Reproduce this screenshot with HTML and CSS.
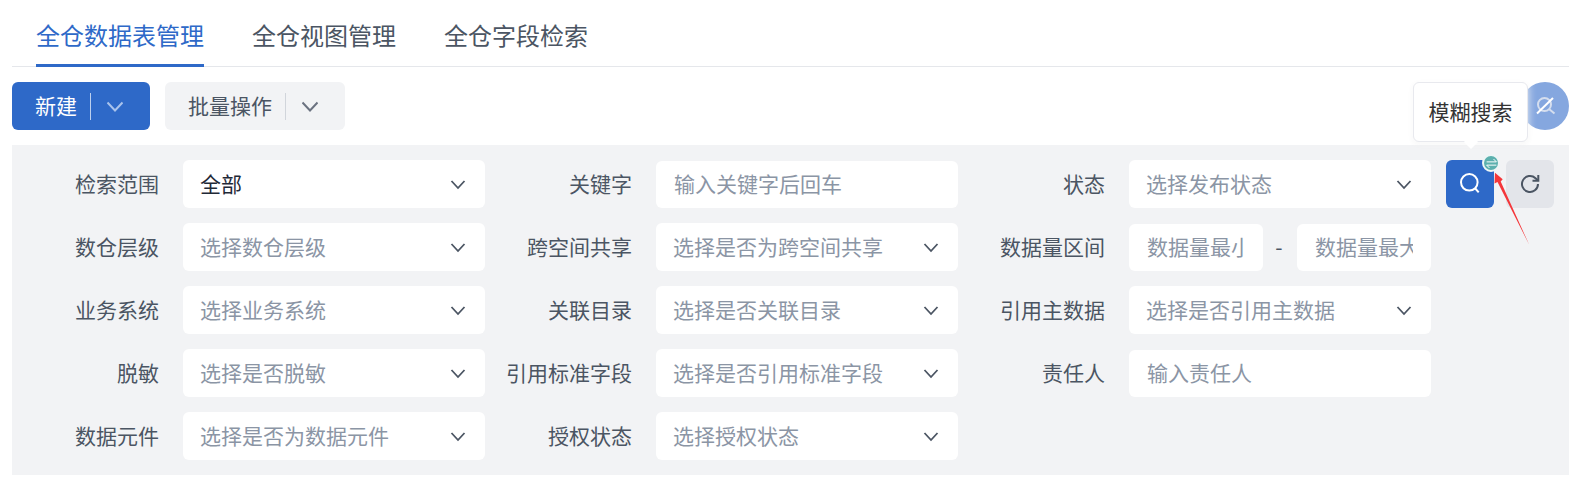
FILE: index.html
```html
<!DOCTYPE html>
<html lang="zh-CN">
<head>
  <meta charset="UTF-8">
  <title>全仓数据表管理</title>
  <link rel="stylesheet" href="styles.css">
</head>
<body>
  <div class="page">
    <nav class="tabs">
      <a class="tab active">全仓数据表管理</a>
      <a class="tab">全仓视图管理</a>
      <a class="tab">全仓字段检索</a>
    </nav>

    <div class="toolbar">
      <div class="btn btn-primary">
        <span>新建</span><i class="divider"></i>
        <svg class="chevron" viewBox="0 0 16 16"><path d="M.5 4.500 8 12.500l7.500-8"/></svg>
      </div>
      <div class="btn btn-plain">
        <span>批量操作</span><i class="divider"></i>
        <svg class="chevron" viewBox="0 0 16 16"><path d="M.5 4.500 8 12.500l7.500-8"/></svg>
      </div>
      <div class="toggle">
        <svg viewBox="0 0 24 24">
          <circle class="faded" cx="11.500" cy="10.500" r="6.500"/>
          <path class="faded" d="m16 15 5.500 4.500"/>
          <path d="M4 19.500 20 4"/>
        </svg>
      </div>
    </div>

    <div class="filters">
      <div class="grid">
        <div class="item">
          <label>检索范围</label>
          <div class="select value"><span>全部</span><svg viewBox="0 0 16 16"><path d="M1.500 5 8 12l6.500-7"/></svg></div>
        </div>
        <div class="item">
          <label>关键字</label>
          <input class="input" placeholder="输入关键字后回车">
        </div>
        <div class="item">
          <label>状态</label>
          <div class="select"><span>选择发布状态</span><svg viewBox="0 0 16 16"><path d="M1.500 5 8 12l6.500-7"/></svg></div>
        </div>

        <div class="item">
          <label>数仓层级</label>
          <div class="select"><span>选择数仓层级</span><svg viewBox="0 0 16 16"><path d="M1.500 5 8 12l6.500-7"/></svg></div>
        </div>
        <div class="item">
          <label>跨空间共享</label>
          <div class="select"><span>选择是否为跨空间共享</span><svg viewBox="0 0 16 16"><path d="M1.500 5 8 12l6.500-7"/></svg></div>
        </div>
        <div class="item">
          <label>数据量区间</label>
          <div class="range">
            <input class="input" placeholder="数据量最小值">
            <span class="dash">-</span>
            <input class="input" placeholder="数据量最大值">
          </div>
        </div>

        <div class="item">
          <label>业务系统</label>
          <div class="select"><span>选择业务系统</span><svg viewBox="0 0 16 16"><path d="M1.500 5 8 12l6.500-7"/></svg></div>
        </div>
        <div class="item">
          <label>关联目录</label>
          <div class="select"><span>选择是否关联目录</span><svg viewBox="0 0 16 16"><path d="M1.500 5 8 12l6.500-7"/></svg></div>
        </div>
        <div class="item">
          <label>引用主数据</label>
          <div class="select"><span>选择是否引用主数据</span><svg viewBox="0 0 16 16"><path d="M1.500 5 8 12l6.500-7"/></svg></div>
        </div>

        <div class="item">
          <label>脱敏</label>
          <div class="select"><span>选择是否脱敏</span><svg viewBox="0 0 16 16"><path d="M1.500 5 8 12l6.500-7"/></svg></div>
        </div>
        <div class="item">
          <label>引用标准字段</label>
          <div class="select"><span>选择是否引用标准字段</span><svg viewBox="0 0 16 16"><path d="M1.500 5 8 12l6.500-7"/></svg></div>
        </div>
        <div class="item">
          <label>责任人</label>
          <input class="input" placeholder="输入责任人">
        </div>

        <div class="item">
          <label>数据元件</label>
          <div class="select"><span>选择是否为数据元件</span><svg viewBox="0 0 16 16"><path d="M1.500 5 8 12l6.500-7"/></svg></div>
        </div>
        <div class="item">
          <label>授权状态</label>
          <div class="select"><span>选择授权状态</span><svg viewBox="0 0 16 16"><path d="M1.500 5 8 12l6.500-7"/></svg></div>
        </div>
      </div>

      <div class="actions">
        <div class="icon-btn search">
          <div class="tooltip">模糊搜索</div>
          <svg viewBox="0 0 24 24"><circle cx="11.300" cy="10.300" r="8.300"/><path d="m17.300 16.500 3.400 3.800"/></svg>
          <span class="badge">
            <svg viewBox="0 0 16 16"><path d="M2 6h12L10.500 2.500M14 10H2l3.500 3.500"/></svg>
          </span>
        </div>
        <div class="icon-btn reset">
          <svg viewBox="0 0 24 24"><path d="M20 12a8 8 0 1 1-2.500-5.800L20 8.500"/><path d="M20.300 3v5.800h-5.800"/></svg>
        </div>
      </div>
    </div>
  </div>

  <svg class="mark" viewBox="0 0 60 90">
    <polygon points="15,2.700 22.700,9.300 20.700,11.500 49.300,75 17.500,12 14.500,13.500"/>
  </svg>
</body>
</html>
```

FILE: styles.css
```css
body {
  margin: 0;
  background-color: #ffffff;
  font-family: "Noto Sans CJK SC", "Noto Sans", sans-serif;
  font-size: 21px;
  color: #4b5563;
}

.page {
  position: relative;
  margin: 0 12px;
  height: 486px;
}

.tabs {
  display: flex;
  gap: 48px;
  height: 66px;
  padding-left: 24px;
  border-bottom: 1px solid #e5e7eb;
}

.tab {
  height: 65px;
  line-height: 70px;
  font-size: 24px;
  color: #4b5563;
}

.tab.active {
  height: 64px;
  color: #2e69c8;
  border-bottom: 3px solid #2e69c8;
}

.toolbar {
  display: flex;
  align-items: center;
  gap: 15px;
  margin: 15px 0;
}

.btn {
  display: flex;
  align-items: center;
  box-sizing: border-box;
  height: 48px;
  padding: 0 27px 0 23px;
  border-radius: 6px;
}

.btn span {
  margin-top: -2px;
}

.btn-primary {
  width: 138px;
  background-color: #2e69c8;
  color: #ffffff;
}

.btn-plain {
  width: 180px;
  background-color: #f2f3f5;
  color: #4b5563;
}

.divider {
  width: 1px;
  height: 27px;
  margin: 0 16px 0 13px;
}

.btn-primary .divider {
  background-color: #bcd0ee;
}

.btn-plain .divider {
  background-color: #d1d5db;
}

.chevron {
  width: 16px;
  height: 16px;
  fill: none;
  stroke-width: 2;
}

.btn-primary .chevron {
  stroke: #a9c3ec;
}

.btn-plain .chevron {
  stroke: #6b7280;
}

.toggle {
  display: flex;
  align-items: center;
  justify-content: center;
  width: 48px;
  height: 48px;
  margin-left: auto;
  border-radius: 50%;
  background-color: #85a7df;
}

.toggle svg {
  width: 24px;
  height: 24px;
  fill: none;
  stroke: #ffffff;
  stroke-width: 2;
}

.toggle .faded {
  stroke: #d5deee;
}

.filters {
  display: flex;
  box-sizing: border-box;
  height: 330px;
  padding: 15px 0;
  background-color: #f2f3f5;
}

.grid {
  display: grid;
  grid-template-columns: repeat(3, 473px);
  grid-auto-rows: 48px;
  row-gap: 15px;
}

.item {
  display: flex;
  align-items: center;
  gap: 24px;
}

.item label {
  flex: none;
  width: 147px;
  margin-top: -2px;
  text-align: right;
  white-space: nowrap;
}

.select,
.input {
  box-sizing: border-box;
  width: 302px;
  background-color: #ffffff;
  border-radius: 6px;
}

.select {
  display: flex;
  align-items: center;
  justify-content: space-between;
  height: 48px;
  padding: 0 19px 0 17px;
  color: #8b95a5;
}

.select span {
  margin-top: -2px;
}

.select.value {
  color: #1f2937;
}

.select svg {
  width: 16px;
  height: 16px;
  fill: none;
  stroke: #4b5563;
  stroke-width: 1.800;
}

.input {
  height: 47px;
  margin-top: 1px;
  padding: 0 18px 3px 18px;
  border: none;
  outline: none;
  font-family: inherit;
  font-size: 21px;
}

.input::placeholder {
  color: #8b95a5;
  opacity: 1;
}

.range {
  display: flex;
  align-items: center;
  justify-content: space-between;
  width: 302px;
}

.range .input {
  width: 134px;
}

.dash {
  margin: -2px 2px 0 0;
  color: #4b5563;
}

.actions {
  display: flex;
  gap: 12px;
  margin-left: 15px;
}

.icon-btn {
  position: relative;
  display: flex;
  align-items: center;
  justify-content: center;
  width: 48px;
  height: 48px;
  border-radius: 6px;
}

.icon-btn > svg {
  width: 24px;
  height: 24px;
  fill: none;
  stroke-width: 2;
}

.search {
  background-color: #2e69c8;
}

.search > svg {
  stroke: #ffffff;
}

.reset {
  background-color: #e3e5ea;
}

.reset > svg {
  stroke: #4b5563;
}

.badge {
  position: absolute;
  top: -6px;
  right: -6px;
  display: flex;
  align-items: center;
  justify-content: center;
  box-sizing: border-box;
  width: 18px;
  height: 18px;
  border: 2px solid #eef6f6;
  border-radius: 50%;
  background-color: #5cb0ae;
}

.badge svg {
  width: 13px;
  height: 13px;
  flex: none;
  fill: none;
  stroke: #ffffff;
  stroke-width: 1.200;
}

.tooltip {
  position: absolute;
  top: -78px;
  left: -33px;
  box-sizing: border-box;
  width: 115px;
  height: 60px;
  line-height: 56px;
  text-align: center;
  background-color: #ffffff;
  border: 1px solid #e8e9ee;
  border-radius: 6px;
  box-shadow: 0 0 8px rgba(255, 255, 255, 0.9), 0 2px 6px rgba(0, 0, 0, 0.05);
  color: #333333;
  white-space: nowrap;
}

.tooltip::after {
  content: "";
  position: absolute;
  left: 50%;
  bottom: -6px;
  width: 10px;
  height: 10px;
  margin-left: -5px;
  background-color: #ffffff;
  transform: rotate(45deg);
}

.mark {
  position: absolute;
  left: 1480px;
  top: 170px;
  width: 60px;
  height: 90px;
  fill: #f4373b;
}
```
